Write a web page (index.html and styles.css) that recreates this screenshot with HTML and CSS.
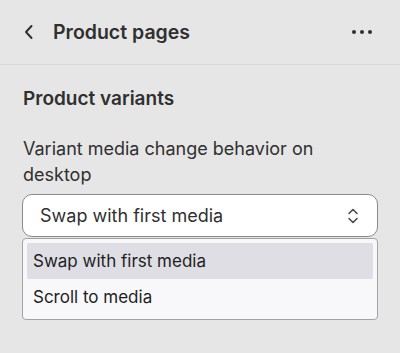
FILE: index.html
```html
<!DOCTYPE html>
<html lang="en">
<head>
  <meta charset="UTF-8">
  <title>Product pages</title>
  <link rel="stylesheet" href="styles.css">
</head>
<body>
  <div class="header">
    <svg class="back" width="10" height="16" viewBox="0 0 10 16">
      <path d="M7.5 2 L2 8 L7.5 14" fill="none" stroke="#303030" stroke-width="2" stroke-linecap="round" stroke-linejoin="round"/>
    </svg>
    <h1>Product pages</h1>
    <div class="more">
      <span></span><span></span><span></span>
    </div>
  </div>

  <div class="section">
    <h2>Product variants</h2>
    <p class="label">Variant media change behavior on desktop</p>

    <div class="select">
      <span>Swap with first media</span>
      <svg width="12" height="18" viewBox="0 0 12 18">
        <path d="M2 6.5 L6 2.5 L10 6.5 M2 11.5 L6 15.5 L10 11.5" fill="none" stroke="#4a4a4a" stroke-width="1.6" stroke-linecap="round" stroke-linejoin="round"/>
      </svg>
    </div>

    <div class="options">
      <div class="option selected">Swap with first media</div>
      <div class="option">Scroll to media</div>
    </div>
  </div>
</body>
</html>
```

FILE: styles.css
```css
body {
  margin: 0;
  background: #e6e6e6;
  font-family: 'Inter', sans-serif;
  color: #303030;
}

.header {
  display: flex;
  align-items: center;
  height: 65px;
  padding: 0 24px;
  border-bottom: 1px solid #d9d9d9;
  box-sizing: border-box;
}

.back {
  margin-right: 19px;
}

h1 {
  flex: 1;
  margin: 0;
  font-size: 19.5px;
  font-weight: 600;
}

.more {
  display: flex;
  gap: 4px;
  margin-right: 4px;
}

.more span {
  width: 4px;
  height: 4px;
  border-radius: 50%;
  background: #303030;
}

.section {
  padding: 21px 22px 0 22px;
}

h2 {
  margin: 0 0 24px 1px;
  font-size: 19px;
  font-weight: 600;
  line-height: 26px;
}

.label {
  margin: 0 0 6px 1px;
  font-size: 18px;
  line-height: 26px;
  width: 330px;
}

.select {
  display: flex;
  align-items: center;
  justify-content: space-between;
  height: 43px;
  padding: 0 18px 0 17px;
  background: #fff;
  border: 1px solid #8a8a8a;
  border-radius: 10px;
  font-size: 18px;
  box-sizing: border-box;
}

.options {
  margin-top: 1px;
  padding: 4px;
  background: #f8f8fb;
  border: 1px solid #a3a3a3;
  border-radius: 4px;
}

.option {
  height: 36px;
  line-height: 36px;
  padding-left: 6px;
  font-size: 17px;
  color: #1e1e1e;
}

.option.selected {
  background: #dedee4;
  border-radius: 2px;
}
```
